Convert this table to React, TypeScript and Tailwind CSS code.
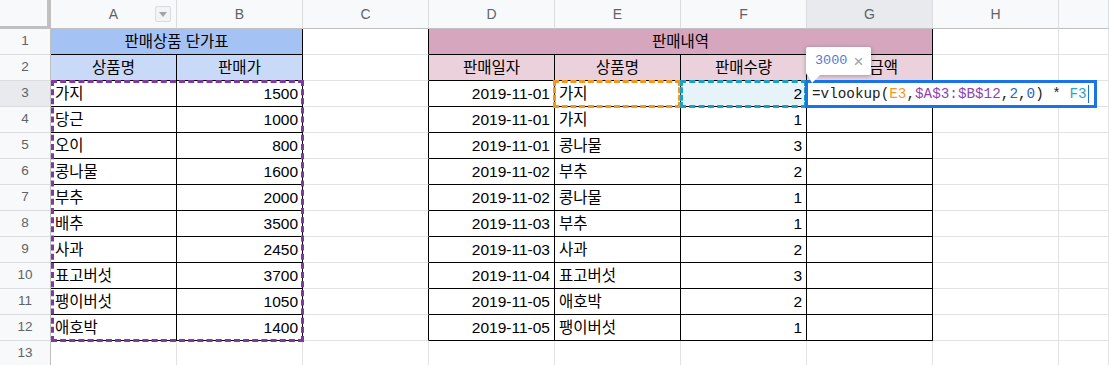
import React from "react";

type Side = "black" | "grid";

const prices: [string, number][] = [
  ["가지", 1500],
  ["당근", 1000],
  ["오이", 800],
  ["콩나물", 1600],
  ["부추", 2000],
  ["배추", 3500],
  ["사과", 2450],
  ["표고버섯", 3700],
  ["팽이버섯", 1050],
  ["애호박", 1400],
];

const sales: [string, string, number][] = [
  ["2019-11-01", "가지", 2],
  ["2019-11-01", "가지", 1],
  ["2019-11-01", "콩나물", 3],
  ["2019-11-02", "부추", 2],
  ["2019-11-02", "콩나물", 1],
  ["2019-11-03", "부추", 1],
  ["2019-11-03", "사과", 2],
  ["2019-11-04", "표고버섯", 3],
  ["2019-11-05", "애호박", 2],
  ["2019-11-05", "팽이버섯", 1],
];

function Cell({
  children,
  right = "grid",
  bottom = "grid",
  align = "left",
  bg = "bg-white",
  span = 1,
}: {
  children?: React.ReactNode;
  right?: Side;
  bottom?: Side;
  align?: "left" | "right" | "center";
  bg?: string;
  span?: number;
}) {
  const r = right === "black" ? "border-r border-r-black" : "border-r border-r-[#e2e2e2]";
  const b = bottom === "black" ? "border-b border-b-black" : "border-b border-b-[#e2e2e2]";
  const a =
    align === "left"
      ? "justify-start pl-[4px]"
      : align === "right"
      ? "justify-end pr-[4px]"
      : "justify-center";
  const s = span === 2 ? "col-span-2" : span === 4 ? "col-span-4" : "";
  return (
    <div
      className={`flex items-center overflow-hidden whitespace-nowrap text-[15.5px] leading-[18px] text-black ${r} ${b} ${a} ${bg} ${s}`}
    >
      {children}
    </div>
  );
}

function RowHead({ n, active = false }: { n: number; active?: boolean }) {
  return (
    <div
      className={`flex items-center justify-center border-r border-r-[#c0c0c0] border-b border-b-[#dadce0] text-[13.5px] text-[#5f6368] ${
        active ? "bg-[#e8eaed]" : "bg-[#f8f9fa]"
      }`}
    >
      {n}
    </div>
  );
}

function ColHead({ label, active = false, filter = false }: { label: string; active?: boolean; filter?: boolean }) {
  return (
    <div
      className={`relative flex items-center justify-center border-r border-r-[#dadce0] border-b border-b-[#c0c0c0] text-[14px] text-[#5f6368] ${
        active ? "bg-[#e8eaed]" : "bg-[#f8f9fa]"
      }`}
    >
      {label}
      {filter && (
        <div className="absolute right-[5px] top-[6px] flex h-[16px] w-[16px] items-center justify-center rounded-[2px] border border-[#dadce0] bg-[#f1f3f4]">
          <div className="h-0 w-0 border-l-[4px] border-r-[4px] border-t-[5px] border-l-transparent border-r-transparent border-t-[#a0a4a8]" />
        </div>
      )}
    </div>
  );
}

export default function App() {
  const rows: React.ReactNode[] = [];

  rows.push(
    <div key="corner" className="border-r-4 border-b-[3px] border-[#c0c0c0] bg-[#f8f9fa]" />
  );
  ["A", "B", "C", "D", "E", "F", "G", "H"].forEach((l) =>
    rows.push(<ColHead key={"h" + l} label={l} active={l === "G"} filter={l === "A"} />)
  );
  rows.push(<ColHead key="hI" label="" />);

  rows.push(<RowHead key="r1" n={1} />);
  rows.push(
    <Cell key="a1" span={2} right="black" bottom="black" align="center" bg="bg-[#a4c2f4]">
      판매상품 단가표
    </Cell>
  );
  rows.push(<Cell key="c1" right="black" />);
  rows.push(
    <Cell key="d1" span={4} right="black" bottom="black" align="center" bg="bg-[#d5a6bd]">
      판매내역
    </Cell>
  );
  rows.push(<Cell key="h1" />);
  rows.push(<Cell key="i1" />);

  rows.push(<RowHead key="r2" n={2} />);
  rows.push(
    <Cell key="a2" right="black" bottom="black" align="center" bg="bg-[#c9daf8]">
      상품명
    </Cell>
  );
  rows.push(
    <Cell key="b2" right="black" bottom="black" align="center" bg="bg-[#c9daf8]">
      판매가
    </Cell>
  );
  rows.push(<Cell key="c2" right="black" />);
  ["판매일자", "상품명", "판매수량", "판매금액"].forEach((t, i) =>
    rows.push(
      <Cell key={"p2" + i} right="black" bottom="black" align="center" bg="bg-[#ead1dc]">
        {t}
      </Cell>
    )
  );
  rows.push(<Cell key="h2" />);
  rows.push(<Cell key="i2" />);

  for (let i = 0; i < 10; i++) {
    const n = i + 3;
    rows.push(<RowHead key={"r" + n} n={n} active={n === 3} />);
    rows.push(
      <Cell key={"a" + n} right="black" bottom="black" align="left">
        {prices[i][0]}
      </Cell>
    );
    rows.push(
      <Cell key={"b" + n} right="black" bottom="black" align="right">
        {prices[i][1]}
      </Cell>
    );
    rows.push(<Cell key={"c" + n} right="black" />);
    rows.push(
      <Cell key={"d" + n} right="black" bottom="black" align="right">
        {sales[i][0]}
      </Cell>
    );
    rows.push(
      <Cell key={"e" + n} right="black" bottom="black" align="left">
        {sales[i][1]}
      </Cell>
    );
    rows.push(
      <Cell key={"f" + n} right="black" bottom="black" align="right" bg={n === 3 ? "bg-[#e6f4f9]" : "bg-white"}>
        {sales[i][2]}
      </Cell>
    );
    rows.push(<Cell key={"g" + n} right="black" bottom="black" />);
    rows.push(<Cell key={"h" + n} />);
    rows.push(<Cell key={"i" + n} />);
  }

  rows.push(<RowHead key="r13" n={13} />);
  for (let c = 0; c < 9; c++) rows.push(<Cell key={"x13" + c} />);

  return (
    <div
      className="relative h-[365px] w-[1109px] overflow-hidden bg-white"
      style={{ fontFamily: '"Liberation Sans", Arial, "Noto Sans CJK KR", sans-serif' }}
    >
      <div className="grid grid-cols-[51px_repeat(8,126px)_1fr] grid-rows-[29px_repeat(13,26px)]">
        {rows}
      </div>

      {/* copy range A3:B12 */}
      <div className="pointer-events-none absolute left-[51px] top-[80px] h-[262px] w-[253px] border-[3px] border-dashed border-[#7e3a9e]" />
      {/* E3 range */}
      <div className="pointer-events-none absolute left-[553px] top-[80px] h-[28px] w-[128px] border-[3px] border-dashed border-[#f3961c]" />
      {/* F3 range */}
      <div className="pointer-events-none absolute left-[680px] top-[80px] h-[28px] w-[127px] border-[3px] border-dashed border-[#1b9fc4]" />

      {/* formula editor */}
      <div
        className="absolute left-[805px] top-[80px] flex h-[28px] w-[292px] items-center border-[3px] border-[#1a73e8] bg-white pl-[4px] text-[14.3px] leading-none whitespace-pre text-[#202124]"
        style={{ fontFamily: '"Liberation Mono", "Courier New", monospace' }}
      >
        <span>=vlookup(</span>
        <span className="text-[#f6981e]">E3</span>
        <span>,</span>
        <span className="text-[#8e44ad]">$A$3:$B$12</span>
        <span>,</span>
        <span className="text-[#2a63cc]">2</span>
        <span>,</span>
        <span className="text-[#2a63cc]">0</span>
        <span>) * </span>
        <span className="text-[#26a6c9]">F3</span>
        <span className="ml-[1px] inline-block h-[18px] w-px bg-[#1a73e8]" />
      </div>

      {/* tooltip */}
      <div className="absolute left-[806px] top-[47px] flex h-[28px] w-[65px] items-center rounded-[2px] bg-white pl-[9px] shadow-[0_1px_4px_rgba(0,0,0,0.3)]">
        <span
          className="text-[13.5px] text-[#4a80d8]"
          style={{ fontFamily: '"Liberation Mono", "Courier New", monospace' }}
        >
          3000
        </span>
        <span className="ml-[6px] text-[17px] leading-none text-[#9aa0a6]">×</span>
      </div>
      <div className="absolute left-[807px] top-[74px] h-0 w-0 border-l-[5px] border-r-[9px] border-t-[9px] border-l-transparent border-r-transparent border-t-white" />
    </div>
  );
}
